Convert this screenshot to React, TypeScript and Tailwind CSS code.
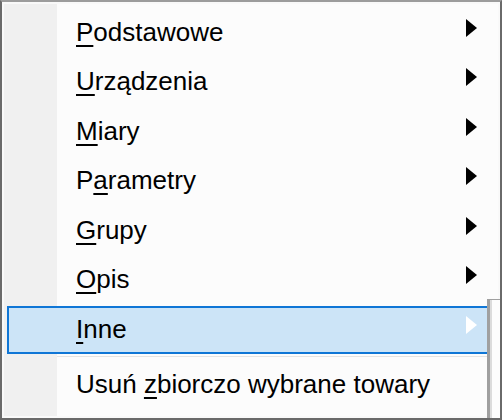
import React from 'react';

type Item = {
  before: string;
  key: string;
  after: string;
  submenu?: boolean;
  active?: boolean;
};

const ITEMS: Item[] = [
  { before: '', key: 'P', after: 'odstawowe', submenu: true },
  { before: '', key: 'U', after: 'rządzenia', submenu: true },
  { before: '', key: 'M', after: 'iary', submenu: true },
  { before: 'P', key: 'a', after: 'rametry', submenu: true },
  { before: '', key: 'G', after: 'rupy', submenu: true },
  { before: '', key: 'O', after: 'pis', submenu: true },
  { before: '', key: 'I', after: 'nne', submenu: true, active: true },
];

function Arrow({ white }: { white?: boolean }) {
  return (
    <svg width="11" height="18" viewBox="0 0 11 18" className="mb-[8px] shrink-0">
      <polygon points="0,0 11,9 0,18" fill={white ? '#ffffff' : '#000000'} />
    </svg>
  );
}

function Row({ item }: { item: Item }) {
  return (
    <div className="relative flex h-[49.5px]">
      <div className="w-[53px] shrink-0 bg-[#f0f0f0]" />
      <div className="flex-1 bg-[#fcfcfc]" />
      {item.active && (
        <div className="absolute top-[2px] left-[3px] right-[3px] h-[48px] border-2 border-[#0f76d6] bg-[#cce4f7]" />
      )}
      <div className="absolute inset-0 flex items-center pl-[72px] pr-[21px]">
        <span className="flex-1 text-[26px] leading-none text-black">
          {item.before}
          <span className="underline decoration-2 underline-offset-[4px]">{item.key}</span>
          {item.after}
        </span>
        {item.submenu && <Arrow white={item.active} />}
      </div>
    </div>
  );
}

export default function App() {
  return (
    <div
      className="relative w-[502px] h-[420px] overflow-hidden border-2 border-[#6a6a6a] border-t-[#9c9c9c] bg-[#f9f9f9] p-[2px]"
      style={{ fontFamily: '"Liberation Sans", Arial, sans-serif' }}
    >
      <div className="flex h-full flex-col bg-[linear-gradient(to_right,#f0f0f0_53px,#fcfcfc_53px)] pt-[3px]">
        {ITEMS.map((item) => (
          <Row key={item.key + item.after} item={item} />
        ))}

        {/* separator */}
        <div className="flex h-[5.5px] items-center">
          <div className="w-[53px] self-stretch bg-[#f0f0f0]" />
          <div className="h-px flex-1 bg-[#e4e4e4]" />
        </div>

        <Row item={{ before: 'Usuń ', key: 'z', after: 'biorczo wybrane towary' }} />
      </div>

      {/* edge of the window lying over the menu's lower right corner */}
      <div className="absolute top-[297px] left-[485px] right-0 bottom-0 border-t border-l-[3px] border-[#a0a0a0] bg-[#fdfdfd]">
        <div className="h-full w-[2px] bg-[#dcdcdc]" />
      </div>
    </div>
  );
}
